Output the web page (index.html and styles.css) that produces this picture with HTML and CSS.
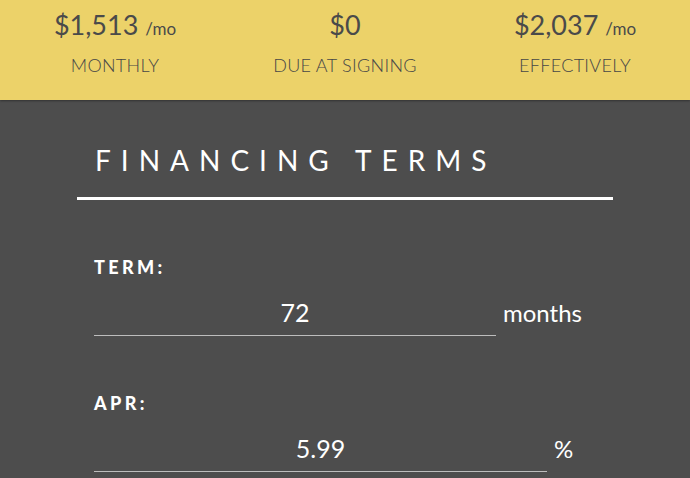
FILE: index.html
```html
<!DOCTYPE html>
<html lang="en">
<head>
<meta charset="utf-8">
<title>Financing</title>
<link rel="stylesheet" href="styles.css">
</head>
<body>
<header class="summary">
  <div class="stat">
    <div class="amount">$1,513 <span class="unit">/mo</span></div>
    <div class="caption">MONTHLY</div>
  </div>
  <div class="stat">
    <div class="amount">$0</div>
    <div class="caption">DUE AT SIGNING</div>
  </div>
  <div class="stat">
    <div class="amount">$2,037 <span class="unit">/mo</span></div>
    <div class="caption">EFFECTIVELY</div>
  </div>
</header>
<main class="panel">
  <h1 class="title">FINANCING TERMS</h1>
  <div class="rule"></div>
  <section class="field field-term">
    <div class="label">TERM:</div>
    <div class="row">
      <div class="input input-term">72</div>
      <div class="suffix">months</div>
    </div>
  </section>
  <section class="field field-apr">
    <div class="label">APR:</div>
    <div class="row">
      <div class="input input-apr">5.99</div>
      <div class="suffix">%</div>
    </div>
  </section>
</main>
</body>
</html>
```
FILE: styles.css
```css
html, body {
  margin: 0;
  padding: 0;
  height: 100%;
}
body {
  background: #4d4d4d;
  font-family: Lato, "Noto Sans", sans-serif;
  overflow: hidden;
}
.summary {
  background: #ecd269;
  height: 100px;
  box-sizing: border-box;
  padding-top: 10px;
  display: grid;
  grid-template-columns: 1fr 1fr 1fr;
  box-shadow: 0 1px 2px rgba(0,0,0,0.35);
  color: #4a4a4a;
  position: relative;
}
.stat {
  text-align: center;
}
.amount {
  font-size: 27px;
  line-height: 30px;
}
.unit {
  font-size: 17px;
  line-height: 17px;
}
.caption {
  margin-top: 15px;
  font-size: 18px;
  line-height: 20px;
  font-weight: 300;
  letter-spacing: 0.3px;
  color: #474747;
}
.panel {
  width: 536px;
  margin: 0 auto;
}
.title {
  margin: 43px 0 0;
  padding-left: 18px;
  font-size: 28px;
  line-height: 34px;
  font-weight: 400;
  letter-spacing: 10px;
  color: #ffffff;
}
.rule {
  margin-top: 20px;
  height: 3px;
  background: #ffffff;
}
.field {
  padding-left: 17px;
}
.field-term {
  margin-top: 57px;
}
.field-apr {
  margin-top: 57px;
}
.label {
  font-size: 18px;
  line-height: 20px;
  font-weight: 900;
  letter-spacing: 3.4px;
  color: #ffffff;
}
.row {
  margin-top: 20px;
  display: flex;
  align-items: baseline;
}
.input {
  box-sizing: border-box;
  font-size: 25px;
  line-height: 30px;
  padding-bottom: 8px;
  text-align: center;
  color: #ffffff;
  border-bottom: 1.5px solid #bdbdbd;
}
.input-term {
  width: 402px;
}
.input-apr {
  width: 453px;
}
.suffix {
  margin-left: 7px;
  font-size: 24px;
  line-height: 30px;
  color: #ffffff;
}
```
